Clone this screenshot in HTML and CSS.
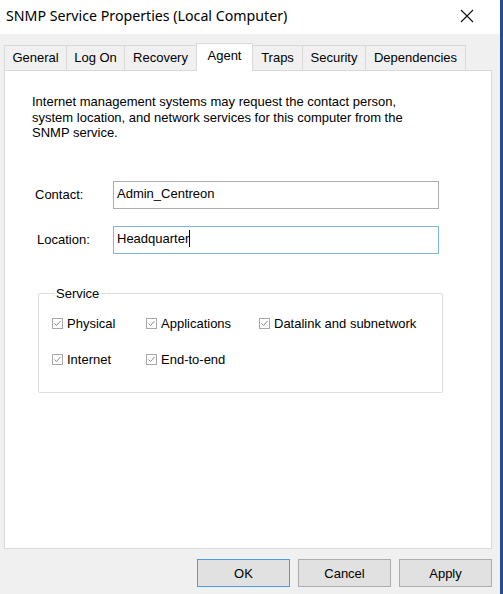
FILE: index.html
```html
<!DOCTYPE html>
<html lang="en">
<head>
    <meta charset="UTF-8">
    <title>SNMP Service Properties (Local Computer)</title>
    <link rel="stylesheet" href="styles.css">
</head>
<body>
    <div class="window">
        <div class="titlebar">
            <span class="title">SNMP Service Properties (Local Computer)</span>
            <svg class="close" width="14" height="14" viewBox="0 0 14 14">
                <path d="M1 1 L13 13 M13 1 L1 13" stroke="#111" stroke-width="1.1" fill="none"/>
            </svg>
        </div>

        <div class="body">
            <div class="tabs">
                <div class="tab">General</div>
                <div class="tab">Log On</div>
                <div class="tab">Recovery</div>
                <div class="tab active">Agent</div>
                <div class="tab">Traps</div>
                <div class="tab">Security</div>
                <div class="tab">Dependencies</div>
            </div>

            <div class="panel">
                <p class="desc">Internet management systems may request the contact person,<br>system location, and network services for this computer from the<br>SNMP service.</p>

                <div class="field">
                    <label class="field-label">Contact:</label>
                    <div class="textbox">Admin_Centreon</div>
                </div>
                <div class="field">
                    <label class="field-label loc">Location:</label>
                    <div class="textbox focused">Headquarter<span class="caret"></span></div>
                </div>

                <fieldset class="group">
                    <legend>Service</legend>
                    <div class="check-grid">
                        <div class="check"><span class="box"><svg width="9" height="9" viewBox="0 0 9 9"><path d="M1.5 4.5 L3.5 6.5 L7.5 2" stroke="#8a8a8a" stroke-width="1" fill="none"/></svg></span>Physical</div>
                        <div class="check"><span class="box"><svg width="9" height="9" viewBox="0 0 9 9"><path d="M1.5 4.5 L3.5 6.5 L7.5 2" stroke="#8a8a8a" stroke-width="1" fill="none"/></svg></span>Applications</div>
                        <div class="check"><span class="box"><svg width="9" height="9" viewBox="0 0 9 9"><path d="M1.5 4.5 L3.5 6.5 L7.5 2" stroke="#8a8a8a" stroke-width="1" fill="none"/></svg></span>Datalink and subnetwork</div>
                        <div class="check"><span class="box"><svg width="9" height="9" viewBox="0 0 9 9"><path d="M1.5 4.5 L3.5 6.5 L7.5 2" stroke="#8a8a8a" stroke-width="1" fill="none"/></svg></span>Internet</div>
                        <div class="check"><span class="box"><svg width="9" height="9" viewBox="0 0 9 9"><path d="M1.5 4.5 L3.5 6.5 L7.5 2" stroke="#8a8a8a" stroke-width="1" fill="none"/></svg></span>End-to-end</div>
                    </div>
                </fieldset>
            </div>

            <div class="buttons">
                <button class="btn default">OK</button>
                <button class="btn">Cancel</button>
                <button class="btn">Apply</button>
            </div>
        </div>
    </div>
</body>
</html>
```

FILE: styles.css
```css
body {
    margin: 0;
    background-color: #f0f0f0;
    font-family: "Liberation Sans", Arial, sans-serif;
    font-size: 13px;
    color: #000;
}

.window {
    width: 500px;
    height: 594px;
    border-right: 3px solid #2a4b8d;
    display: flex;
    flex-direction: column;
    background-color: #f0f0f0;
}

.titlebar {
    height: 34px;
    flex: none;
    background-color: #fff;
    display: flex;
    align-items: center;
    justify-content: space-between;
    padding: 0 26px 3px 6px;
    box-sizing: border-box;
}

.title {
    font-family: "Noto Sans", "Open Sans", sans-serif;
    font-size: 14.2px;
    color: #000;
}

.body {
    flex: 1;
    display: flex;
    flex-direction: column;
    padding: 8px 8px 0 4px;
}

.tabs {
    display: flex;
    align-items: flex-end;
    height: 28px;
    position: relative;
    z-index: 1;
}

.tab {
    height: 25px;
    line-height: 24px;
    border: 1px solid #d9d9d9;
    border-bottom: none;
    border-left: none;
    background-color: #f0f0f0;
    box-sizing: border-box;
    text-align: center;
}

.tab:first-child {
    border-left: 1px solid #d9d9d9;
}

.tab:nth-child(1) { width: 63px; }
.tab:nth-child(2) { width: 58px; }
.tab:nth-child(3) { width: 72px; }
.tab:nth-child(4) { width: 56px; }
.tab:nth-child(5) { width: 50px; }
.tab:nth-child(6) { width: 63px; }
.tab:nth-child(7) { width: 100px; }

.tab.active {
    height: 28px;
    line-height: 24px;
    background-color: #fff;
    border-left: 1px solid #d9d9d9;
    margin-left: -1px;
    margin-bottom: -1px;
    width: 57px;
}

.panel {
    flex: none;
    height: 479px;
    box-sizing: border-box;
    background-color: #fff;
    border: 1px solid #d9d9d9;
    padding: 23px 0 0 27px;
}

.desc {
    margin: 0 0 40px 0;
    line-height: 15.5px;
}

.field {
    display: flex;
    align-items: center;
    margin-bottom: 17px;
}

.field-label {
    width: 78px;
    padding-left: 3px;
}

.field-label.loc {
    padding-left: 5px;
    width: 76px;
}

.textbox {
    width: 326px;
    height: 28px;
    box-sizing: border-box;
    border: 1px solid #adadad;
    padding: 0 3px;
    line-height: 24px;
}

.textbox.focused {
    border-color: #7eb4ea;
}

.caret {
    display: inline-block;
    width: 1px;
    height: 17px;
    background-color: #000;
    vertical-align: -4px;
}

.group {
    margin: 32px 0 0 6px;
    width: 405px;
    height: 107px;
    box-sizing: border-box;
    border: 1px solid #dcdcdc;
    padding: 14px 0 0 13px;
    border-radius: 2px;
}

.group legend {
    padding: 0 1px;
    margin-left: 3px;
}

.check-grid {
    display: grid;
    grid-template-columns: 94px 113px auto;
    row-gap: 22px;
    margin-top: 2px;
}

.check {
    display: flex;
    align-items: center;
    height: 14px;
}

.box {
    width: 11px;
    height: 11px;
    box-sizing: border-box;
    border: 1px solid #a8a8a8;
    display: inline-flex;
    align-items: center;
    justify-content: center;
    margin-right: 4px;
}

.box svg {
    display: block;
}

.buttons {
    display: flex;
    justify-content: flex-end;
    gap: 8px;
    margin-top: 10px;
}

.btn {
    width: 93px;
    height: 28px;
    font-family: "Liberation Sans", Arial, sans-serif;
    font-size: 13px;
    color: #000;
    background-color: #e1e1e1;
    border: 1px solid #adadad;
    padding: 0;
}

.btn.default {
    border-color: #4d9be8;
}
```
